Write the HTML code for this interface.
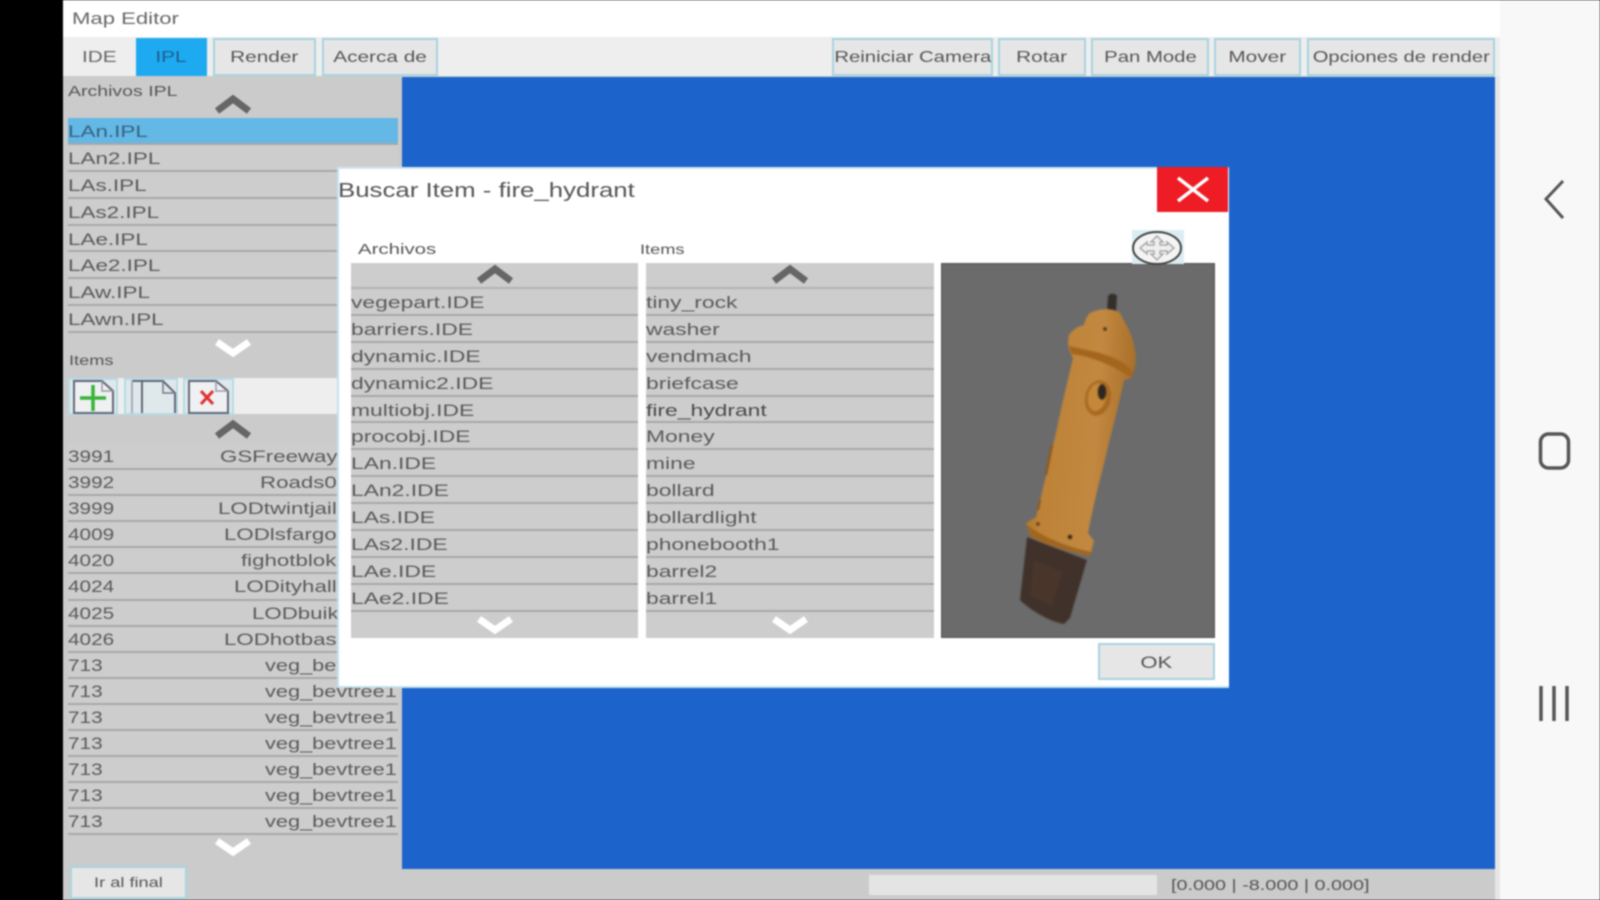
<!DOCTYPE html>
<html><head><meta charset="utf-8"><title>Map Editor</title>
<style>
html,body{margin:0;padding:0;width:1600px;height:900px;overflow:hidden;background:#000}
#a{position:relative;width:1600px;height:900px;overflow:hidden;filter:blur(.85px);font-family:"Liberation Sans",sans-serif;color:#555}
.b{position:absolute;box-sizing:border-box}
.t{position:absolute;white-space:nowrap;transform:scaleX(1.3);transform-origin:0 50%;line-height:20px}
.btn{position:absolute;box-sizing:border-box;top:38px;height:38px;background:#e6e6e6;border:2px solid #a9d3df;font-size:16px;color:#555;line-height:36px;text-align:center;white-space:nowrap}
.btn span{display:inline-block;transform:scaleX(1.3)}
.l{position:absolute}
.r{position:relative;box-sizing:border-box;border-bottom:2px solid #a8a8a8;font-size:17px;color:#5a5a5a;white-space:nowrap;background:#cdcdcd}
.r span{position:absolute;top:0;transform:scaleX(1.32);transform-origin:0 50%}
.h27 .r{height:26.9px;line-height:28px}
.h26 .r{height:26.1px;line-height:26px}
.h26 .r span:first-child{transform:scaleX(1.22)}
.h26 .r span+span{transform:scaleX(1.28)}
.h26 .r span.w{transform:scaleX(1.31)}
.d .r span{transform:scaleX(1.345)}
</style></head><body><div id="a">
<div class="b" style="left:63px;top:0;width:1437px;height:37px;background:#fff"></div>
<div class="t" style="left:72px;top:9px;font-size:17px;color:#666">Map Editor</div>
<div class="b" style="left:63px;top:37px;width:1437px;height:39px;background:#eee"></div>
<div class="b" style="left:1500px;top:0;width:100px;height:900px;background:#f8f8f8"></div>
<div class="b" style="left:63px;top:76px;width:1437px;height:824px;background:#cbcbcb"></div>
<div class="b" style="left:402px;top:77px;width:1093px;height:792px;background:#1c64cb"></div>
<div class="b" style="left:1495px;top:76px;width:5px;height:824px;background:#e6e6e6"></div>

<div class="btn" style="left:69px;width:61px;border-color:#eee;color:#666;background:#eee"><span>IDE</span></div>
<div class="btn" style="left:136px;width:71px;background:#1eaaf0;border-color:#1eaaf0;color:#1c5f8c"><span>IPL</span></div>
<div class="btn" style="left:213px;width:103px"><span>Render</span></div>
<div class="btn" style="left:322px;width:116px"><span>Acerca de</span></div>
<div class="btn" style="left:832px;width:161px"><span style="transform:scaleX(1.27)">Reiniciar Camera</span></div>
<div class="btn" style="left:998px;width:88px"><span>Rotar</span></div>
<div class="btn" style="left:1091px;width:118px"><span style="transform:scaleX(1.27)">Pan Mode</span></div>
<div class="btn" style="left:1214px;width:87px"><span>Mover</span></div>
<div class="btn" style="left:1307px;width:188px"><span style="transform:scaleX(1.26)">Opciones de render</span></div>

<div class="t" style="left:68px;top:82px;font-size:15px">Archivos IPL</div>
<div class="l h27" style="left:68px;top:118px;width:330px">
<div class="r" style="background:#63b8e6;color:#38617f"><span style="left:0">LAn.IPL</span></div>
<div class="r"><span style="left:0">LAn2.IPL</span></div>
<div class="r"><span style="left:0">LAs.IPL</span></div>
<div class="r"><span style="left:0">LAs2.IPL</span></div>
<div class="r"><span style="left:0">LAe.IPL</span></div>
<div class="r"><span style="left:0">LAe2.IPL</span></div>
<div class="r"><span style="left:0">LAw.IPL</span></div>
<div class="r"><span style="left:0">LAwn.IPL</span></div>
</div>
<div class="t" style="left:69px;top:350px;font-size:14px">Items</div>
<div class="b" style="left:68px;top:378px;width:280px;height:36px;background:#eee"></div>
<div class="b" style="left:68px;top:378px;width:50px;height:37px;background:#dfe9ec;border:2px solid #b5dbe5"></div>
<div class="b" style="left:124px;top:378px;width:54px;height:37px;background:#dfe9ec;border:2px solid #b5dbe5"></div>
<div class="b" style="left:183px;top:378px;width:51px;height:37px;background:#dfe9ec;border:2px solid #b5dbe5"></div>

<div class="l h26" style="left:68px;top:444px;width:330px">
<div class="r"><span style="left:0">3991</span><span class="w" style="left:152px">GSFreeway</span></div>
<div class="r"><span style="left:0">3992</span><span class="w" style="left:192px">Roads0</span></div>
<div class="r"><span style="left:0">3999</span><span class="w" style="left:150px">LODtwintjail</span></div>
<div class="r"><span style="left:0">4009</span><span class="w" style="left:156px">LODlsfargo</span></div>
<div class="r"><span style="left:0">4020</span><span class="w" style="left:173px">fighotblok</span></div>
<div class="r"><span style="left:0">4024</span><span class="w" style="left:166px">LODityhall</span></div>
<div class="r"><span style="left:0">4025</span><span class="w" style="left:184px">LODbuik</span></div>
<div class="r"><span style="left:0">4026</span><span class="w" style="left:156px">LODhotbas</span></div>
<div class="r"><span style="left:0">713</span><span style="left:197px">veg_bevtree1</span></div>
<div class="r"><span style="left:0">713</span><span style="left:197px">veg_bevtree1</span></div>
<div class="r"><span style="left:0">713</span><span style="left:197px">veg_bevtree1</span></div>
<div class="r"><span style="left:0">713</span><span style="left:197px">veg_bevtree1</span></div>
<div class="r"><span style="left:0">713</span><span style="left:197px">veg_bevtree1</span></div>
<div class="r"><span style="left:0">713</span><span style="left:197px">veg_bevtree1</span></div>
<div class="r"><span style="left:0">713</span><span style="left:197px">veg_bevtree1</span></div>
</div>
<div class="btn" style="left:70px;top:866px;width:117px;height:33px;line-height:28px;font-size:14px"><span>Ir al final</span></div>
<div class="b" style="left:869px;top:875px;width:288px;height:20px;background:#e4e4e4"></div>
<div class="t" style="left:1171px;top:876px;font-size:15px;transform:scaleX(1.32)">[0.000 | -8.000 | 0.000]</div>

<!-- dialog -->
<div class="b" style="left:337px;top:167px;width:892px;height:521px;background:#fff;border:2px solid #c2e2ee;border-right:0;border-top-color:#d4e6f4"></div>
<div class="t" style="left:338px;top:181px;font-size:20px;color:#555;transform:scaleX(1.29)">Buscar Item - fire_hydrant</div>
<div class="b" style="left:1157px;top:167px;width:71px;height:45px;background:#ee1c25"></div>
<div class="t" style="left:358px;top:240px;font-size:15px;transform:scaleX(1.36)">Archivos</div>
<div class="t" style="left:640px;top:239px;font-size:14px">Items</div>
<div class="b" style="left:351px;top:263px;width:287px;height:375px;background:#cdcdcd"></div>
<div class="b" style="left:646px;top:263px;width:288px;height:375px;background:#cdcdcd"></div>
<div class="b" style="left:351px;top:287px;width:287px;height:2px;background:#b3b3b3"></div>
<div class="b" style="left:646px;top:287px;width:288px;height:2px;background:#b3b3b3"></div>
<div class="l h27 d" style="left:351px;top:289px;width:287px">
<div class="r"><span style="left:0">vegepart.IDE</span></div>
<div class="r"><span style="left:0">barriers.IDE</span></div>
<div class="r"><span style="left:0">dynamic.IDE</span></div>
<div class="r"><span style="left:0">dynamic2.IDE</span></div>
<div class="r"><span style="left:0">multiobj.IDE</span></div>
<div class="r"><span style="left:0">procobj.IDE</span></div>
<div class="r"><span style="left:0">LAn.IDE</span></div>
<div class="r"><span style="left:0">LAn2.IDE</span></div>
<div class="r"><span style="left:0">LAs.IDE</span></div>
<div class="r"><span style="left:0">LAs2.IDE</span></div>
<div class="r"><span style="left:0">LAe.IDE</span></div>
<div class="r"><span style="left:0">LAe2.IDE</span></div>
</div>
<div class="l h27 d" style="left:646px;top:289px;width:288px">
<div class="r"><span>tiny_rock</span></div>
<div class="r"><span>washer</span></div>
<div class="r"><span>vendmach</span></div>
<div class="r"><span>briefcase</span></div>
<div class="r" style="color:#4a4a4a"><span>fire_hydrant</span></div>
<div class="r"><span>Money</span></div>
<div class="r"><span>mine</span></div>
<div class="r"><span>bollard</span></div>
<div class="r"><span>bollardlight</span></div>
<div class="r"><span>phonebooth1</span></div>
<div class="r"><span>barrel2</span></div>
<div class="r"><span>barrel1</span></div>
</div>
<div class="b" style="left:941px;top:263px;width:274px;height:375px;background:#6b6b6b;border:1px solid #555"></div>
<div class="b" style="left:1132px;top:230px;width:52px;height:34px;background:#dcedf2"></div>
<div class="btn" style="left:1098px;top:643px;width:117px;height:37px;line-height:35px;font-size:17px"><span>OK</span></div>

<svg class="b" style="left:0;top:0" width="1600" height="900" viewBox="0 0 1600 900">
<defs>
<linearGradient id="g" x1="0" y1="0" x2="1" y2="0.15"><stop offset="0" stop-color="#a36a28"/><stop offset=".25" stop-color="#bd8236"/><stop offset=".7" stop-color="#c28840"/><stop offset="1" stop-color="#a97029"/></linearGradient>
<filter id="s" x="-10%" y="-10%" width="120%" height="120%"><feGaussianBlur stdDeviation=".9"/></filter>
</defs>
<g fill="none" stroke-linecap="butt" stroke-linejoin="miter">
<path d="M217 111 L233 99 L249 111" stroke="#666" stroke-width="7"/>
<path d="M217 342 L233 353 L249 342" stroke="#fff" stroke-width="7"/>
<path d="M217 436 L233 424 L249 436" stroke="#666" stroke-width="7"/>
<path d="M217 841 L233 852 L249 841" stroke="#fff" stroke-width="7"/>
<path d="M479 281 L495 269 L511 281" stroke="#666" stroke-width="7"/>
<path d="M479 619 L495 630 L511 619" stroke="#fff" stroke-width="7"/>
<path d="M774 281 L790 269 L806 281" stroke="#666" stroke-width="7"/>
<path d="M774 619 L790 630 L806 619" stroke="#fff" stroke-width="7"/>
<path d="M1178 178 L1208 201 M1208 178 L1178 201" stroke="#fff" stroke-width="3.5"/>
<!-- file icons -->
<path d="M74 381 H102 L113 391 V413 H74 Z" stroke="#667" stroke-width="2" fill="#eef0f1"/>
<path d="M102 381 V391 H113" stroke="#99a" stroke-width="1.5"/>
<path d="M80 398 H106 M93 385 V411" stroke="#38b438" stroke-width="3.500"/>
<path d="M142 413 V381 M132 381 H163 L175 393 V413" stroke="#667" stroke-width="2"/>
<path d="M163 381 V393 H175" stroke="#778" stroke-width="1.5"/>
<path d="M132 381 V413" stroke="#aab" stroke-width="2"/>
<path d="M189 381 H216 L228 391 V413 H189 Z" stroke="#667" stroke-width="2" fill="#eef0f1"/>
<path d="M216 381 V391 H228" stroke="#99a" stroke-width="1.5"/>
<path d="M201 391 L213 404 M213 391 L201 404" stroke="#e03030" stroke-width="3"/>
<!-- move icon -->
<ellipse cx="1157" cy="248" rx="24" ry="16" stroke="#444" stroke-width="2" fill="#f4f4f4"/>
<path d="M1157 236 L1151 242 H1154 V245 H1147 V242 L1140 248 L1147 254 V251 H1154 V254 H1151 L1157 260 L1163 254 H1160 V251 H1167 V254 L1174 248 L1167 242 V245 H1160 V242 H1163 Z" stroke="#aaa" stroke-width="1.5" fill="#eee"/>
<!-- nav -->
<path d="M1563 181 L1546 199 L1563 218" stroke="#555" stroke-width="3"/>
<rect x="1540.500" y="434" width="28" height="34" rx="8" stroke="#555" stroke-width="3.500"/>
<path d="M1541 686 V721 M1554 686 V721 M1567 686 V721" stroke="#555" stroke-width="3.500"/>
</g>
<!-- hydrant -->
<g filter="url(#s)">
<path d="M1108 296 C1110 293 1115 293 1117 296 L1116 312 L1107 312 Z" fill="#332e2b"/>
<path d="M1027 537 L1087 560 L1070 618 L1064 624 C1050 622 1030 610 1020 600 Z" fill="#3f312a"/>
<path d="M1034 560 L1062 572 L1052 606 L1030 596 Z" fill="#4a362c"/>
<path d="M1090 313 C1100 308 1112 308 1120 313 C1126 325 1133 335 1135 350 C1137 362 1134 372 1131 378 L1124 380 C1120 400 1112 430 1106 455 C1100 480 1092 510 1088 533 L1094 541 L1090 556 C1070 552 1045 545 1030 536 L1026 523 L1036 517 C1044 485 1053 447 1062 405 L1073 358 C1069 352 1067 345 1069 335 C1074 328 1080 326 1084 325 C1085 320 1087 316 1090 313 Z" fill="url(#g)"/>
<path d="M1069 346 C1085 350 1105 352 1122 362 L1134 372 L1131 378 C1115 366 1090 356 1071 354 Z" fill="#a4661f"/>
<path d="M1027 525 C1045 538 1070 548 1092 552 L1090 556 C1070 552 1045 545 1030 536 Z" fill="#9f6620"/>
<path d="M1052 445 L1046 475 M1040 500 L1038 510" stroke="#8a5a24" stroke-width="2.500" fill="none"/>
<ellipse cx="1098" cy="398" rx="13" ry="18" transform="rotate(12 1098 398)" fill="#a86a22"/>
<ellipse cx="1097" cy="397" rx="9" ry="14" transform="rotate(12 1097 397)" fill="#c58838"/>
<ellipse cx="1102" cy="392" rx="4.500" ry="8" fill="#2d2622"/>
<circle cx="1105" cy="329" r="2" fill="#4a3420"/><circle cx="1070" cy="537" r="2.500" fill="#3a2a1c"/><circle cx="1038" cy="524" r="2" fill="#6a441c"/>
</g>
</svg>
</div></body></html>
